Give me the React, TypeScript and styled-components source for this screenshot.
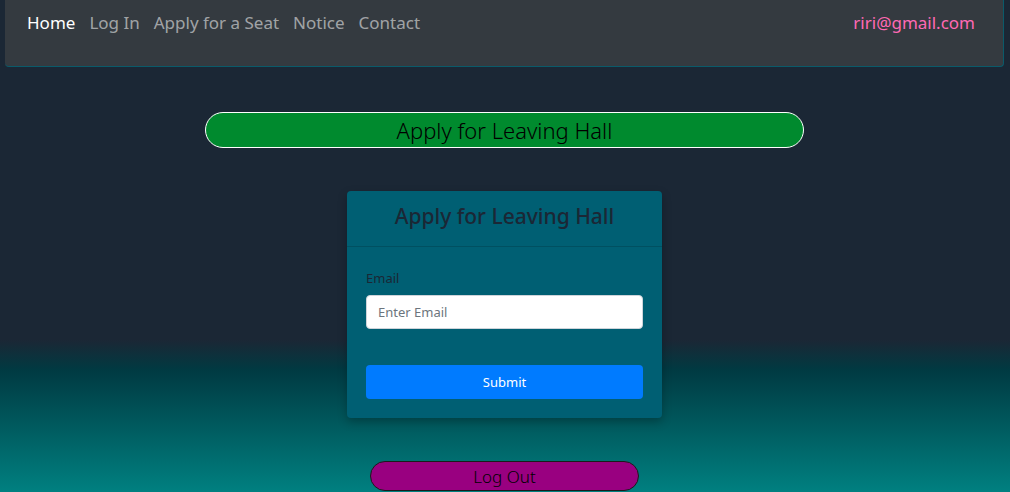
import React from "react";
import styled, { createGlobalStyle } from "styled-components";

const Global = createGlobalStyle`
  html, body { margin: 0; padding: 0; }
  body {
    font-family: "Noto Sans", "Open Sans", sans-serif;
    min-height: 492px;
    background: linear-gradient(to bottom, #1b2735 0px, #1b2735 340px, #003a42 370px, #008080 492px);
    overflow: hidden;
  }
  * { box-sizing: border-box; }
`;

const Page = styled.div`
  padding: 0 6px 0 5px;
  display: flex;
  flex-direction: column;
  align-items: center;
`;

const NavBar = styled.nav`
  align-self: stretch;
  height: 67px;
  background: #343a40;
  border-bottom: 1px solid #0a5a6a;
  border-right: 1px solid #0a5a6a;
  border-radius: 0 0 4px 4px;
  display: flex;
  justify-content: space-between;
  align-items: flex-start;
  padding: 9px 28px 0 15px;
`;

const NavLinks = styled.div`
  display: flex;
`;

const NavLink = styled.a<{ $active?: boolean }>`
  font-size: 17px;
  line-height: 28px;
  padding: 0 7px;
  color: ${(p) => (p.$active ? "#ffffff" : "rgba(255,255,255,0.55)")};
  text-decoration: none;
`;

const UserEmail = styled.span`
  font-size: 17px;
  line-height: 28px;
  color: #ff69b4;
`;

const PillButton = styled.button<{ $bg: string; $border: string; $w: number; $h: number; $fs: number }>`
  width: ${(p) => p.$w}px;
  height: ${(p) => p.$h}px;
  background: ${(p) => p.$bg};
  border: 1px solid ${(p) => p.$border};
  border-radius: 18px;
  color: #000;
  font-family: "Noto Sans", sans-serif;
  font-size: ${(p) => p.$fs}px;
  font-weight: 300;
  display: flex;
  align-items: center;
  justify-content: center;
  padding: 0;
`;

const Card = styled.div`
  margin-top: 43px;
  width: 315px;
  background: #005f73;
  border-radius: 4px;
  box-shadow: 0 4px 10px rgba(0, 0, 0, 0.25);
`;

const CardHeader = styled.div`
  height: 56px;
  padding-bottom: 6px;
  border-bottom: 1px solid rgba(0, 0, 0, 0.15);
  display: flex;
  align-items: center;
  justify-content: center;
  font-size: 21px;
  font-weight: 500;
  color: #1b2735;
`;

const CardBody = styled.div`
  padding: 22px 19px 19px;
  display: flex;
  flex-direction: column;
`;

const Label = styled.label`
  font-size: 13px;
  line-height: 18px;
  color: #1b2735;
  margin-bottom: 8px;
`;

const Input = styled.input`
  height: 34px;
  border: 1px solid #ced4da;
  border-radius: 4px;
  padding: 0 11px;
  font-family: "Noto Sans", sans-serif;
  font-size: 13px;
  color: #495057;
  &::placeholder { color: #6c757d; }
`;

const Submit = styled.button`
  margin-top: 36px;
  height: 34px;
  background: #007bff;
  border: none;
  border-radius: 4px;
  color: #fff;
  font-family: "Noto Sans", sans-serif;
  font-size: 13px;
`;

const Spacer = styled.div<{ $h: number }>`
  height: ${(p) => p.$h}px;
`;

export default function App() {
  return (
    <>
      <Global />
      <Page>
        <NavBar>
          <NavLinks>
            <NavLink $active href="#">Home</NavLink>
            <NavLink href="#">Log In</NavLink>
            <NavLink href="#">Apply for a Seat</NavLink>
            <NavLink href="#">Notice</NavLink>
            <NavLink href="#">Contact</NavLink>
          </NavLinks>
          <UserEmail>riri@gmail.com</UserEmail>
        </NavBar>
        <Spacer $h={45} />
        <PillButton $bg="#008a2e" $border="#ffffff" $w={599} $h={36} $fs={22}>
          Apply for Leaving Hall
        </PillButton>
        <Card>
          <CardHeader>Apply for Leaving Hall</CardHeader>
          <CardBody>
            <Label>Email</Label>
            <Input placeholder="Enter Email" />
            <Submit>Submit</Submit>
          </CardBody>
        </Card>
        <Spacer $h={43} />
        <PillButton $bg="#990080" $border="#1b1b1b" $w={269} $h={30} $fs={17}>
          Log Out
        </PillButton>
      </Page>
    </>
  );
}
